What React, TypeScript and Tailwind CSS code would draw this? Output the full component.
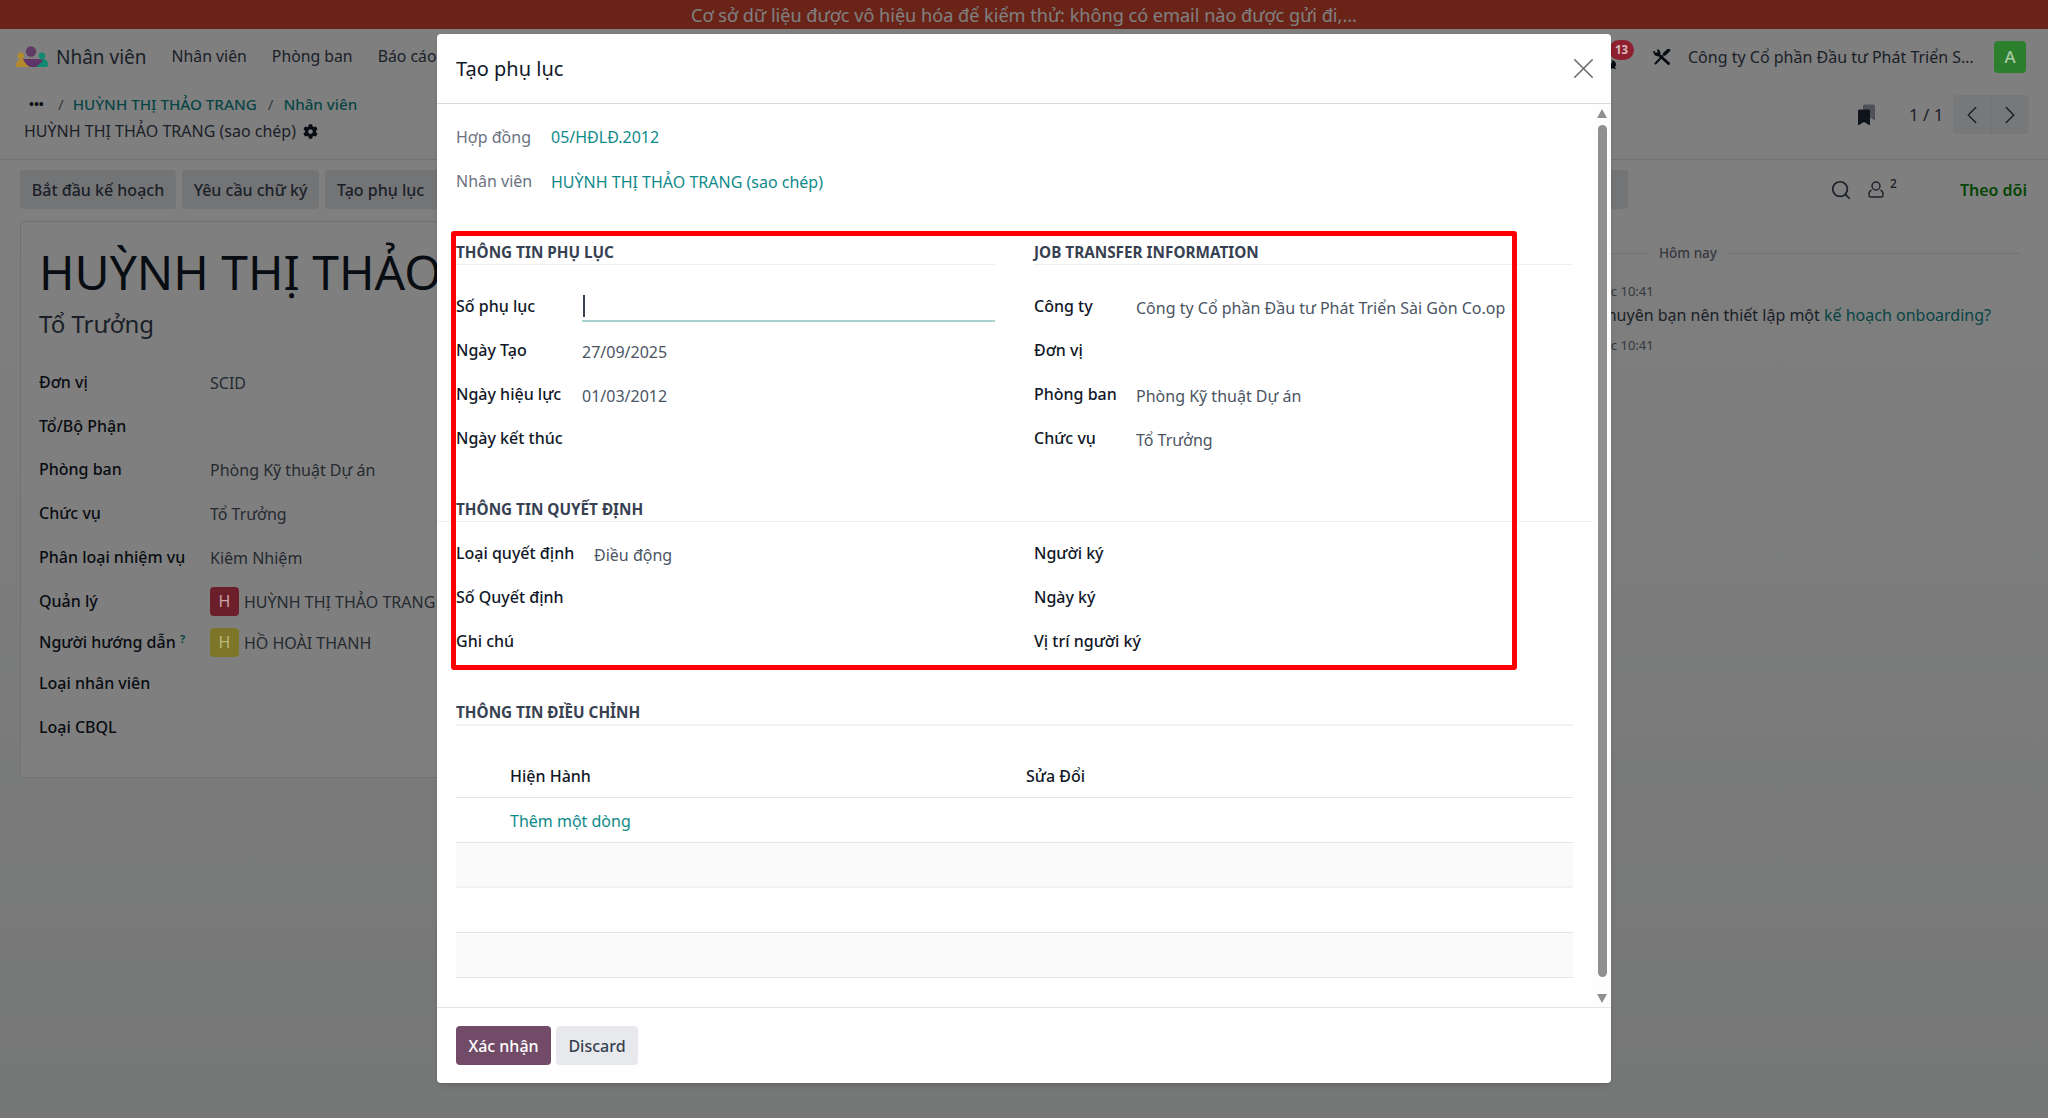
import { ChevronLeft, ChevronRight, Search, X } from "lucide-react";
import { FaCog, FaBookmark, FaComments } from "react-icons/fa";

const sheetRows = [
  { label: "Đơn vị", value: "SCID", h: "h-[44px]" },
  { label: "Tổ/Bộ Phận", value: "", h: "h-[43px]" },
  { label: "Phòng ban", value: "Phòng Kỹ thuật Dự án", h: "h-[44px]" },
  { label: "Chức vụ", value: "Tổ Trưởng", h: "h-[44px]" },
  { label: "Phân loại nhiệm vụ", value: "Kiêm Nhiệm", h: "h-[44px]" },
];

// logo and avatars sit above the backdrop with their dimmed colours written out
const Logo = () => (
  <svg width="32" height="22" viewBox="0 0 32 22" className="relative z-10 shrink-0">
    <circle cx="15" cy="5.5" r="5.2" fill="#5f3a64" />
    <circle cx="4.8" cy="9.8" r="3.2" fill="#b58a2d" />
    <circle cx="26" cy="9.8" r="3.2" fill="#0f8a72" />
    <path d="M0 21 C0 15 3 13 6 13 L11 13 L17 21 Z" fill="#b58a2d" />
    <path d="M24 13 L27 13 C30 13 32 15 32 19 C32 20 31 21 30 21 L19 21 Z" fill="#0f8a72" />
    <path d="M7 13 L22 13 C25 13 27 14 27 15 L20 21 L15 21 C12 21 9 17 7 13 Z" fill="#5f3468" />
  </svg>
);

const ToolsIcon = () => (
  <svg width="18" height="16" viewBox="0 0 18 16" className="shrink-0 text-[#111827]" fill="none" stroke="currentColor">
    {/* wrench */}
    <path d="M4.5 4.5 L15.5 14.5" strokeWidth="3" strokeLinecap="round" />
    <path d="M1.3 2.2 A3.4 3.4 0 0 0 5.9 5.9 A3.4 3.4 0 0 0 4.3 1" strokeWidth="2" />
    {/* screwdriver */}
    <path d="M9.5 7 L2.5 14.5" strokeWidth="2" strokeLinecap="round" />
    <path d="M11.5 5 L15.6 1.2" strokeWidth="3.4" strokeLinecap="round" />
  </svg>
);

const UserIcon = () => (
  <svg width="16" height="17" viewBox="0 0 16 17" fill="none" stroke="currentColor" strokeWidth="1.4" className="shrink-0">
    <circle cx="8" cy="5" r="4" />
    <path d="M3.5 9.2 C1.8 10 1 11.3 1 13 L1 14.4 C1 15.3 1.7 16 2.6 16 L13.4 16 C14.3 16 15 15.3 15 14.4 L15 13 C15 11.3 14.2 10 12.5 9.2" />
  </svg>
);

const Field = ({ label, value, labelW }: { label: string; value?: string; labelW: string }) => (
  <div className="flex items-center h-[44px]">
    <div className={`${labelW} shrink-0 font-medium text-[#111827]`}>{label}</div>
    <div className="text-[#4b5563] mt-[3px] whitespace-nowrap">{value}</div>
  </div>
);

const SectionTitle = ({ children }: { children: string }) => (
  <div className="h-[24px] flex items-center border-b border-[#eceef0] text-[15.3px] font-bold text-[#374151] whitespace-nowrap">
    {children}
  </div>
);

export default function App() {
  return (
    <div className="relative w-[2048px] h-[1118px] overflow-hidden bg-white text-[16px] text-[#111827] font-['Noto_Sans',sans-serif]">
      {/* banner */}
      <div className="h-[29px] bg-[#d2462f] text-white flex items-center justify-center pt-[1px] text-[18.1px] leading-none">
        Cơ sở dữ liệu được vô hiệu hóa để kiểm thử: không có email nào được gửi đi,...
      </div>

      {/* navbar */}
      <div className="h-[56px] flex items-center pl-[16px] pr-[22px] text-[#374151]">
        <Logo />
        <div className="ml-[8px] text-[19px] text-[#374151]">Nhân viên</div>
        <div className="ml-[25px] flex gap-[25px] text-[15.8px]">
          <span>Nhân viên</span>
          <span>Phòng ban</span>
          <span>Báo cáo</span>
        </div>
        <div className="ml-auto flex items-center">
          <div className="relative mr-[18px] w-[36px] h-[30px]">
            <FaComments className="absolute left-0 top-[12px] w-[17px] h-[17px] text-[#111827]" />
            <div className="absolute z-10 left-[10px] top-[-2px] w-[25px] h-[20px] rounded-full bg-[#8f2030] text-[#d9b8bc] text-[11.5px] font-bold flex items-center justify-center">13</div>
          </div>
          <ToolsIcon />
          <div className="ml-[17px] w-[291px] truncate">Công ty Cổ phần Đầu tư Phát Triển Sài Gòn Co.op</div>
          <div className="relative z-10 ml-[15px] w-[32px] h-[32px] rounded-[4px] bg-[#2b7f2d] text-[#a9c9a9] text-[17px] font-medium flex items-center justify-center">A</div>
        </div>
      </div>

      {/* control panel */}
      <div className="h-[75px] border-b border-[#e5e7eb] flex pl-[24px] pr-[19px]">
        <div className="flex-1 pt-[6px]">
          <div className="h-[26px] flex items-center font-medium text-[15.2px] text-[#0f8a8a] whitespace-nowrap">
            <span className="ml-[5px] w-[14px] text-[#111827] font-bold text-[13px] leading-none">•••</span>
            <span className="ml-[15px] text-[#6b7280] font-normal">/</span>
            <span className="ml-[9px]">HUỲNH THỊ THẢO TRANG</span>
            <span className="ml-[11px] text-[#6b7280] font-normal">/</span>
            <span className="ml-[10px]">Nhân viên</span>
          </div>
          <div className="h-[28px] flex items-center gap-[7px] text-[#374151] whitespace-nowrap">
            HUỲNH THỊ THẢO TRANG (sao chép)
            <FaCog className="w-[15px] h-[15px] text-[#111827]" />
          </div>
        </div>
        <div className="flex items-center h-[58px] pt-[1px]">
          <div className="relative w-[17px] h-[22px]">
            <FaBookmark className="absolute right-0 top-0 w-[12px] h-[17px] text-[#9ca3af]" />
            <FaBookmark className="absolute left-0 bottom-0 w-[12px] h-[17px] text-[#1f2937]" />
          </div>
          <div className="ml-[34px] text-[17px] text-[#374151] whitespace-nowrap">1 / 1</div>
          <div className="ml-[9.5px] flex h-[39px] w-[76px] rounded-[4px] bg-[#eef0f2] overflow-hidden text-[#374151]">
            <div className="flex-1 flex items-center justify-center border-r border-[#e5e7eb]">
              <ChevronLeft className="w-[30px] h-[30px]" strokeWidth={1.2} />
            </div>
            <div className="flex-1 flex items-center justify-center">
              <ChevronRight className="w-[30px] h-[30px]" strokeWidth={1.2} />
            </div>
          </div>
        </div>
      </div>

      {/* action bar and chatter below, page tint runs down to the bottom */}
      <div className="h-[959px] bg-gradient-to-b from-white to-[#ecefee]">
        <div className="h-[60px] flex items-center pl-[20px] pr-[21px] pt-[10px] pb-[11px]">
          <div className="flex gap-[6px] text-[#374151] font-medium whitespace-nowrap">
            <div className="h-[39px] w-[156px] pt-[1px] rounded-[4px] bg-[#e7e9ed] flex items-center justify-center">Bắt đầu kế hoạch</div>
            <div className="h-[39px] w-[137px] pt-[1px] rounded-[4px] bg-[#e7e9ed] flex items-center justify-center">Yêu cầu chữ ký</div>
            <div className="h-[39px] w-[125px] pt-[1px] pl-[12px] rounded-[4px] bg-[#e7e9ed] flex items-center">Tạo phụ lục</div>
            <div className="h-[39px] w-[1172px] rounded-[4px] bg-[#e7e9ed]" />
          </div>
          <div className="ml-auto flex items-center text-[#374151]">
            <Search className="w-[22px] h-[22px]" strokeWidth={1.9} />
            <div className="ml-[16px]"><UserIcon /></div>
            <span className="ml-[6px] -mt-[12px] text-[12px] font-medium">2</span>
            <span className="ml-[63px] pt-[1px] text-[#0a8a0a] font-semibold">Theo dõi</span>
          </div>
        </div>

        <div className="flex">
          <div className="ml-[20px] w-[1540px] h-[557px] mt-[1px] bg-white border border-[#dfe2e6] rounded-[3px] pl-[18px] pt-[18px] shrink-0">
            <div className="h-[64px] flex items-center text-[48px] text-[#111827] whitespace-nowrap">HUỲNH THỊ THẢO TRANG</div>
            <div className="mt-[3px] h-[34px] flex items-center text-[24px] text-[#374151]">Tổ Trưởng</div>
            <div className="mt-[19px]">
              {sheetRows.map((r) => (
                <div key={r.label} className={`${r.h} flex items-center`}>
                  <div className="w-[171px] font-medium text-[#111827]">{r.label}</div>
                  <div className="text-[#4b5563] mt-[2px]">{r.value}</div>
                </div>
              ))}
              <div className="h-[44px] flex items-center">
                <div className="w-[171px] font-medium">Quản lý</div>
                <div className="relative z-10 w-[29px] h-[29px] rounded-[4px] bg-[#6b1f2b] text-[#c8a4a6] text-[16px] flex items-center justify-center">H</div>
                <div className="ml-[5px] text-[#4b5563] whitespace-nowrap mt-[2px]">HUỲNH THỊ THẢO TRANG</div>
              </div>
              <div className="h-[38px] flex items-center">
                <div className="w-[171px] font-medium whitespace-nowrap">
                  Người hướng dẫn <sup className="text-[#0f8a8a] text-[11px] font-bold">?</sup>
                </div>
                <div className="relative z-10 w-[29px] h-[29px] rounded-[4px] bg-[#7d7628] text-[#bdb97c] text-[16px] flex items-center justify-center">H</div>
                <div className="ml-[5px] text-[#4b5563] whitespace-nowrap mt-[2px]">HỒ HOÀI THANH</div>
              </div>
              <div className="h-[44px] flex items-center font-medium">Loại nhân viên</div>
              <div className="h-[44px] flex items-center font-medium">Loại CBQL</div>
            </div>
          </div>

          <div className="flex-1 min-w-0 pr-[28px] pt-[20px] text-[#374151]">
            <div className="flex items-center h-[26px] gap-[11px] text-[13.5px] font-medium text-[#6b7280]">
              <div className="w-[88px] border-t border-[#e5e7eb]" />
              <span>Hôm nay</span>
              <div className="flex-1 border-t border-[#e5e7eb]" />
            </div>
            <div className="mt-[16px] pl-[36px] text-[13px] text-[#6b7280] whitespace-nowrap">Lúc 10:41</div>
            <div className="mt-[1px] flex justify-end pr-[29px] whitespace-nowrap">
              <span>
                Chúng tôi khuyên bạn nên thiết lập một <span className="text-[#0f8a8a]">kế hoạch onboarding?</span>
              </span>
            </div>
            <div className="mt-[9px] pl-[36px] text-[13px] text-[#6b7280] whitespace-nowrap">Lúc 10:41</div>
          </div>
        </div>
      </div>

      {/* backdrop */}
      <div className="absolute inset-0 bg-black/50" />

      {/* modal */}
      <div className="absolute z-20 left-[437px] top-[34px] w-[1174px] h-[1049px] flex flex-col bg-white rounded-[4px] shadow-md">
        <div className="h-[70px] shrink-0 flex items-center justify-between pl-[19px] pr-[10px] border-b border-[#d8dadd]">
          <div className="text-[20px] text-[#111827] font-normal">Tạo phụ lục</div>
          <X className="w-[35px] h-[35px] text-[#6b6b6b]" strokeWidth={1.1} />
        </div>

        <div className="flex-1 min-h-0 flex">
          <div className="flex-1 min-w-0 pt-[11px]">
            <div className="pl-[19px] pr-[20px]">
              <div className="flex items-center h-[44px]">
                <div className="w-[95px] text-[#6b7280] -mt-[1px]">Hợp đồng</div>
                <div className="text-[#0f8a8a]">05/HĐLĐ.2012</div>
              </div>
              <div className="flex items-center h-[44px]">
                <div className="w-[95px] text-[#6b7280]">Nhân viên</div>
                <div className="text-[#0f8a8a] mt-[2px]">HUỲNH THỊ THẢO TRANG (sao chép)</div>
              </div>

              <div className="mt-[38px] grid grid-cols-2 gap-x-[39px]">
                <div>
                  <SectionTitle>THÔNG TIN PHỤ LỤC</SectionTitle>
                  <div className="mt-[19px]">
                    <div className="flex items-center h-[44px]">
                      <div className="w-[126px] shrink-0 font-medium">Số phụ lục</div>
                      <div className="relative flex-1 h-[27px] mt-[4px] border-b-2 border-[#a9d3d3]">
                        <div className="absolute left-[1px] top-0 w-[2px] h-[22px] bg-[#374151]" />
                      </div>
                    </div>
                    <Field label="Ngày Tạo" value="27/09/2025" labelW="w-[126px]" />
                    <Field label="Ngày hiệu lực" value="01/03/2012" labelW="w-[126px]" />
                    <Field label="Ngày kết thúc" labelW="w-[126px]" />
                  </div>
                </div>
                <div>
                  <SectionTitle>JOB TRANSFER INFORMATION</SectionTitle>
                  <div className="mt-[19px]">
                    <Field label="Công ty" value="Công ty Cổ phần Đầu tư Phát Triển Sài Gòn Co.op" labelW="w-[102px]" />
                    <Field label="Đơn vị" labelW="w-[102px]" />
                    <Field label="Phòng ban" value="Phòng Kỹ thuật Dự án" labelW="w-[102px]" />
                    <Field label="Chức vụ" value="Tổ Trưởng" labelW="w-[102px]" />
                  </div>
                </div>
              </div>
            </div>

            <div className="mt-[37px] pl-[19px]">
              <div className="-ml-[19px] pl-[19px] pt-[1px] h-[25px] flex items-center border-b border-[#eceef0] text-[15.3px] font-bold text-[#374151]">
                THÔNG TIN QUYẾT ĐỊNH
              </div>
            </div>
            <div className="mt-[9px] pl-[19px] pr-[20px] grid grid-cols-2 gap-x-[39px]">
              <div>
                <Field label="Loại quyết định" value="Điều động" labelW="w-[138px]" />
                <Field label="Số Quyết định" labelW="w-[138px]" />
                <Field label="Ghi chú" labelW="w-[138px]" />
              </div>
              <div>
                <Field label="Người ký" labelW="w-[102px]" />
                <Field label="Ngày ký" labelW="w-[102px]" />
                <Field label="Vị trí người ký" labelW="w-[132px]" />
              </div>
            </div>

            <div className="mt-[37px] pl-[19px] pr-[20px]">
              <div className="h-[26px] flex items-center border-b-2 border-[#f1f2f4] text-[15.3px] font-bold text-[#374151]">
                THÔNG TIN ĐIỀU CHỈNH
              </div>
              <div className="mt-[31px] h-[41px] pb-[2px] flex items-center border-b border-[#e3e5e8] font-medium">
                <div className="pl-[54px] w-[570px]">Hiện Hành</div>
                <div>Sửa Đổi</div>
              </div>
              <div className="h-[45px] flex items-center pl-[54px] pt-[1px] border-b border-[#e3e5e8] text-[#0f8a8a]">Thêm một dòng</div>
              <div className="h-[45px] bg-[#fafafa] border-b-2 border-[#f1f2f4]" />
              <div className="h-[45px] border-b border-[#e3e5e8]" />
              <div className="h-[45px] bg-[#fafafa] border-b border-[#e3e5e8]" />
            </div>
          </div>

          {/* scrollbar */}
          <div className="relative w-[18px] shrink-0 bg-[#fdfdfd] flex flex-col items-center pt-[5px] pb-[4px]">
            <div className="w-0 h-0 border-x-[5.5px] border-x-transparent border-b-[9px] border-b-[#8f8f8f]" />
            <div className="mt-[7px] w-[9px] flex-1 rounded-full bg-[#8f8f8f]" />
            <div className="mt-[17px] w-0 h-0 border-x-[5.5px] border-x-transparent border-t-[9px] border-t-[#8f8f8f]" />
          </div>
        </div>

        <div className="h-[76px] shrink-0 border-t border-[#e3e5e8] pl-[19px] pt-[18px] flex items-start gap-[5px]">
          <div className="h-[39px] w-[95px] pt-[1px] rounded-[4px] bg-[#714b67] text-white font-medium flex items-center justify-center">Xác nhận</div>
          <div className="h-[39px] w-[82px] pt-[1px] rounded-[4px] bg-[#e7e9ed] text-[#374151] font-medium flex items-center justify-center">Discard</div>
        </div>
      </div>

      {/* red annotation box */}
      <div className="absolute z-20 left-[451px] top-[231px] w-[1066px] h-[439px] border-[5px] border-[#ff0000] rounded-[3px]" />
    </div>
  );
}
